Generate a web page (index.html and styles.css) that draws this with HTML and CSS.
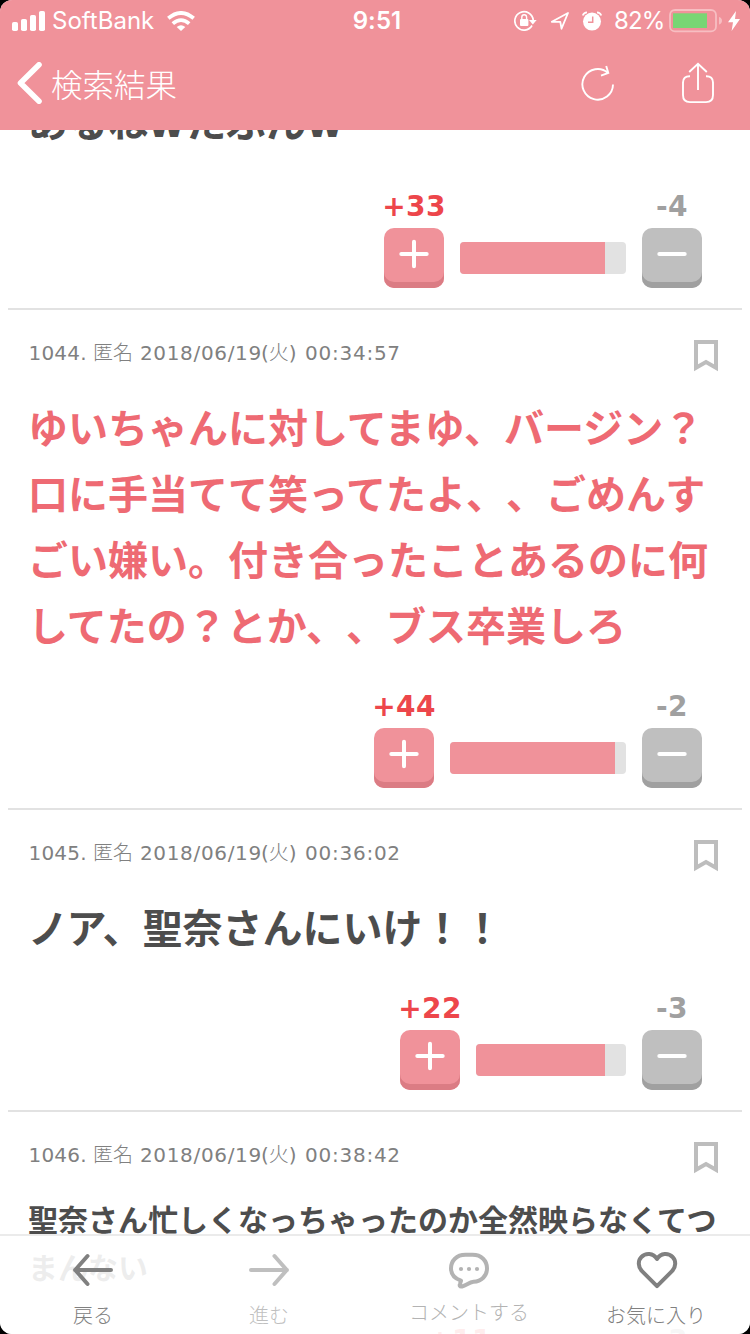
FILE: index.html
```html
<!DOCTYPE html>
<html lang="ja">
<head>
<meta charset="utf-8">
<title>検索結果</title>
<link rel="stylesheet" href="styles.css">
</head>
<body>
<div class="screen">
  <header class="header">
    <div class="status">
      <div class="status-left">
        <svg class="signal" width="33" height="20" viewBox="0 0 33 20" fill="#fff"><rect x="0" y="11" width="6" height="9" rx="1.8"/><rect x="9" y="8" width="6" height="12" rx="1.8"/><rect x="18" y="4" width="6" height="16" rx="1.8"/><rect x="27" y="0" width="6" height="20" rx="1.8"/></svg>
        <span class="carrier">SoftBank</span>
        <svg class="wifi" width="28" height="20" viewBox="0 0 28 20"><g fill="none" stroke="#fff" stroke-width="3.8"><path d="M1.3 7.3Q14 -3.4 26.7 7.3"/><path d="M5.8 12.6Q14 5.6 22.2 12.6"/></g><path d="M14 20L9.7 15.9Q14 12.5 18.3 15.9Z" fill="#fff"/></svg>
      </div>
      <span class="clock">9:51</span>
      <div class="status-right">
        <svg width="23" height="22" viewBox="0 0 23 22"><path d="M18 15.5A9.2 9.2 0 1 1 19.2 10" fill="none" stroke="#fff" stroke-width="1.7"/><path d="M15 10H22.7L18.8 14.4Z" fill="#fff"/><rect x="6" y="9" width="8.4" height="7" rx="1" fill="#fff"/><path d="M7.8 9.5V7.2a2.4 2.4 0 0 1 4.8 0V9.5" fill="none" stroke="#fff" stroke-width="1.4"/></svg>
        <svg class="locate" width="20" height="20" viewBox="0 0 20 20"><path d="M1.8 10.8L18 2L11.5 17.7L10.3 10.8Z" fill="none" stroke="#fff" stroke-width="1.8" stroke-linejoin="round"/></svg>
        <svg class="alarm" width="20" height="20" viewBox="0 0 20 20"><circle cx="10" cy="10.6" r="9" fill="#fff"/><path d="M.7 4.5Q1.8 1.6 5 1.4M19.3 4.5Q18.2 1.6 15 1.4" fill="none" stroke="#fff" stroke-width="1.7"/><path d="M10.7 5.5V11.3H6" fill="none" stroke="#f0929a" stroke-width="1.5"/></svg>
        <span class="percent">82%</span>
        <svg class="battery" width="53" height="24" viewBox="0 0 53 24"><rect x="1" y="1" width="46" height="21.4" rx="5" fill="none" stroke="#f7bec2" stroke-width="1.8"/><rect x="4" y="4.3" width="34" height="14.7" fill="#78d674"/><path d="M50 8Q53 9 53 11.8T50 15.6Z" fill="#f7bec2"/></svg>
        <svg class="bolt" width="12" height="20" viewBox="0 0 12 20"><path d="M8 0L0 11.2H5L3.6 20L12 8H7Z" fill="#fff"/></svg>
      </div>
    </div>
    <nav class="navbar">
      <svg width="25" height="42" viewBox="0 0 25 42"><path d="M22 2.8L3.5 21L22 39.2" fill="none" stroke="#fff" stroke-width="5.6" stroke-linecap="round" stroke-linejoin="round"/></svg>
      <span class="back-label">検索結果</span>
      <svg class="reload" width="34" height="38" viewBox="0 0 34 38"><path d="M32 20.5A15.3 15.3 0 1 1 27 9M25.2 2L27.3 9L20 11.7" fill="none" stroke="#fff" stroke-width="1.9"/></svg>
      <svg width="34" height="42" viewBox="0 0 34 42"><path d="M9 14.2Q2 14 2 20.5V33Q2 40.1 9 40.1H25Q32 40.1 32 33V20.5Q32 14 25 14.2M17 28V2M8.2 10L17 1.8L25.8 10" fill="none" stroke="#fff" stroke-width="1.9"/></svg>
    </nav>
  </header>

  <main class="thread">
    <article class="comment first">
      <p class="body large">あるね<span class="wide">w</span>たぶん<span class="wide">w</span></p>
      <div class="votes">
        <div class="vote plus"><b>+33</b><button><svg width="30" height="30" viewBox="0 0 30 30"><path d="M2.3 15H27.7M15 2.8V27.2"/></svg></button></div>
        <div class="bar" style="width:166px"><i style="width:145px"></i></div>
        <div class="vote minus"><b>-4</b><button><svg width="30" height="30" viewBox="0 0 30 30"><path d="M2.3 15H27.7"/></svg></button></div>
      </div>
    </article>
    <article class="comment">
      <div class="meta"><span class="num">1044.</span><span class="name">匿名</span><span class="date">2018/06/19</span><span class="day">(<span class="kanji">火</span>)</span><span class="time">00:34:57</span>
        <svg class="bookmark" width="24" height="32" viewBox="0 0 24 32"><path d="M2 2H22V27.8L12 22L2 27.8Z"/></svg></div>
      <p class="body large popular">ゆいちゃんに対してまゆ、バージン？<br>口に手当てて笑ってたよ、、ごめんす<br>ごい嫌い。付き合ったことあるのに何<br>してたの？とか、、ブス卒業しろ</p>
      <div class="votes">
        <div class="vote plus"><b>+44</b><button><svg width="30" height="30" viewBox="0 0 30 30"><path d="M2.3 15H27.7M15 2.8V27.2"/></svg></button></div>
        <div class="bar" style="width:176px"><i style="width:165px"></i></div>
        <div class="vote minus"><b>-2</b><button><svg width="30" height="30" viewBox="0 0 30 30"><path d="M2.3 15H27.7"/></svg></button></div>
      </div>
    </article>
    <article class="comment">
      <div class="meta"><span class="num">1045.</span><span class="name">匿名</span><span class="date">2018/06/19</span><span class="day">(<span class="kanji">火</span>)</span><span class="time">00:36:02</span>
        <svg class="bookmark" width="24" height="32" viewBox="0 0 24 32"><path d="M2 2H22V27.8L12 22L2 27.8Z"/></svg></div>
      <p class="body large"><span class="kern">ノ</span>ア、聖奈さんにいけ！！</p>
      <div class="votes">
        <div class="vote plus"><b>+22</b><button><svg width="30" height="30" viewBox="0 0 30 30"><path d="M2.3 15H27.7M15 2.8V27.2"/></svg></button></div>
        <div class="bar" style="width:150px"><i style="width:129px"></i></div>
        <div class="vote minus"><b>-3</b><button><svg width="30" height="30" viewBox="0 0 30 30"><path d="M2.3 15H27.7"/></svg></button></div>
      </div>
    </article>
    <article class="comment">
      <div class="meta"><span class="num">1046.</span><span class="name">匿名</span><span class="date">2018/06/19</span><span class="day">(<span class="kanji">火</span>)</span><span class="time">00:38:42</span>
        <svg class="bookmark" width="24" height="32" viewBox="0 0 24 32"><path d="M2 2H22V27.8L12 22L2 27.8Z"/></svg></div>
      <p class="body">聖奈さん忙しくなっちゃったのか全然映らなくてつ<br>まんない</p>
      <div class="votes">
        <div class="vote plus"><b>+11</b><button><svg width="30" height="30" viewBox="0 0 30 30"><path d="M2.3 15H27.7M15 2.8V27.2"/></svg></button></div>
        <div class="bar" style="width:120px"><i style="width:94px"></i></div>
        <div class="vote minus"><b>-3</b><button><svg width="30" height="30" viewBox="0 0 30 30"><path d="M2.3 15H27.7"/></svg></button></div>
      </div>
    </article>
  </main>

  <nav class="toolbar">
    <div class="tool"><svg width="42" height="36" viewBox="0 0 42 36"><path d="M39 18H3M15.5 4L3.2 18L15.5 32"/></svg><span>戻る</span></div>
    <div class="tool disabled"><svg width="42" height="36" viewBox="0 0 42 36"><path d="M3 18H39M26.5 4L38.8 18L26.5 32"/></svg><span>進む</span></div>
    <div class="tool muted"><svg width="42" height="36" viewBox="0 0 42 36"><path d="M17.5 2.8H24.5C33.5 2.8 39 8.7 39 16.3C39 24 33.5 29.3 25.5 29.8C21 30.2 18.5 33.3 14 34.5C11.8 35 11.3 33.5 12 32L13 28.6C6.5 26.5 3 22.3 3 16.3C3 8.7 8.5 2.8 17.5 2.8Z"/><g class="dots"><circle cx="13" cy="17" r="2.1"/><circle cx="21" cy="17" r="2.1"/><circle cx="29" cy="17" r="2.1"/></g></svg><span>コメントする</span></div>
    <div class="tool"><svg class="heart" width="42" height="38" viewBox="0 0 42 38"><path d="M21 35.2L6 20.2C1.9 16 1.8 9.5 5.4 6C9.7 1.5 17.2 1.7 21 8C24.8 1.7 32.3 1.5 36.6 6C40.2 9.5 40.1 16 36 20.2Z"/></svg><span>お気に入り</span></div>
  </nav>
</div>
</body>
</html>
```
FILE: styles.css
```css
* { box-sizing: border-box; margin: 0; padding: 0; }
body { background: #000; font-family: "DejaVu Sans", "Noto Sans CJK JP", sans-serif; text-spacing-trim: space-all; }
svg { display: block; flex: none; }

.screen {
  position: relative;
  display: flex;
  flex-direction: column;
  width: 750px;
  height: 1334px;
  overflow: hidden;
  border-radius: 12px;
  background: #fff;
}

/* Header */
.header { flex: none; height: 130px; background: #f0929a; color: #fff; }
.status {
  display: grid;
  grid-template-columns: 1fr auto 1fr;
  align-items: center;
  height: 40px;
  padding: 1px 10px 0 12px;
  font: 24px/40px Inter, sans-serif;
}
.status-left, .status-right { display: flex; align-items: center; }
.status-right { justify-content: flex-end; }
.signal, .wifi { margin-bottom: 1px; }
.carrier { margin-left: 7px; width: 102px; white-space: nowrap; }
.wifi { margin-left: 13px; }
.clock { font-weight: 600; padding-left: 2px; letter-spacing: .1px; }
.locate { margin-left: 13px; }
.alarm { margin-left: 12px; }
.percent { margin-left: 12px; width: 51px; white-space: nowrap; letter-spacing: -.9px; }
.battery { margin-left: 4px; }
.bolt { margin-left: 6px; }
.navbar { display: flex; align-items: center; height: 86px; padding: 0 35px 0 17px; }
.back-label {
  flex: 1;
  padding-left: 9px;
  font: 300 31.5px/44px "Noto Sans CJK JP", sans-serif;
}
.reload { margin-right: 66px; }

/* Comments */
.thread { flex: 1; min-height: 0; overflow: hidden; padding: 0 8px; }
.comment { border-bottom: 2px solid #e2e2e2; padding: 0 20px 20px; }
.comment.first { margin-top: -42px; }
.comment.first .body { margin-bottom: 2px; }
.meta {
  display: flex;
  align-items: center;
  height: 84px;
  padding-top: 2px;
  color: #808080;
  font-size: 20px;
  white-space: nowrap;
}
.num { width: 65px; padding-left: .5px; letter-spacing: .2px; }
.name { width: 47px; margin-top: -3px; font-family: "Noto Sans CJK JP", sans-serif; font-weight: 300; }
.date { width: 121px; letter-spacing: .65px; }
.day { width: 44px; }
.kanji { font-family: "Noto Sans CJK JP", sans-serif; font-weight: 300; line-height: 20px; }
.time { letter-spacing: .75px; }
.bookmark { margin: 5px 4px 0 auto; fill: none; stroke: #bdbdbd; stroke-width: 4; }
.body { padding-top: 1px; margin-bottom: -1px; color: #4d4d4d; font-weight: 700; font-size: 30px; line-height: 48px; white-space: nowrap; }
.body.large { font-size: 40px; line-height: 66px; padding-top: 2px; margin-bottom: -2px; }
.body.popular { color: #ee6a73; }
.comment.first .body.large { margin-bottom: 2px; }
.kern { letter-spacing: -1.5px; }
.wide { letter-spacing: 1.2px; }

/* Votes */
.votes { display: flex; justify-content: flex-end; align-items: flex-end; gap: 16px; height: 130px; padding-right: 20px; }
.vote { display: flex; flex-direction: column; align-items: center; width: 60px; }
.vote b { margin-bottom: -1px; font-size: 28px; line-height: 44px; letter-spacing: .4px; white-space: nowrap; }
.plus b { color: #ed464b; }
.minus b { color: #a0a0a0; }
.vote button {
  display: flex;
  justify-content: center;
  width: 60px;
  height: 60px;
  padding-top: 11px;
  border: 0;
  border-radius: 10px;
}
.plus button { background: #f0929a; box-shadow: inset 0 -6px #db7c84; }
.minus button { background: #bfbfbf; box-shadow: inset 0 -6px #a0a0a0; }
.vote button svg { stroke: #fff; stroke-width: 4; stroke-linecap: round; }
.bar { height: 32px; margin-bottom: 14px; border-radius: 4px; overflow: hidden; background: #e2e2e2; }
.bar i { display: block; height: 100%; background: #f0929a; }

/* Bottom toolbar, floating over the thread */
.toolbar {
  position: absolute;
  inset: auto 0 0;
  display: grid;
  grid-template-columns: 186px 166px 234px 140px;
  height: 100px;
  border-top: 2px solid #ebebeb;
  background: rgba(255, 255, 255, .9);
}
.tool { display: flex; flex-direction: column; align-items: center; padding-top: 15px; color: #808080; }
.tool svg { height: 38px; fill: none; stroke: currentColor; stroke-width: 4; stroke-linecap: round; stroke-linejoin: round; }
.tool span { margin-top: 11px; font: 300 20px/30px "Noto Sans CJK JP", sans-serif; white-space: nowrap; }
.disabled { color: #bfbfbf; }
.muted { color: #b3b3b3; }
.muted span { margin-top: 8px; }
.dots { fill: currentColor; stroke: none; }
.tool .heart { margin-left: 2px; }
```
